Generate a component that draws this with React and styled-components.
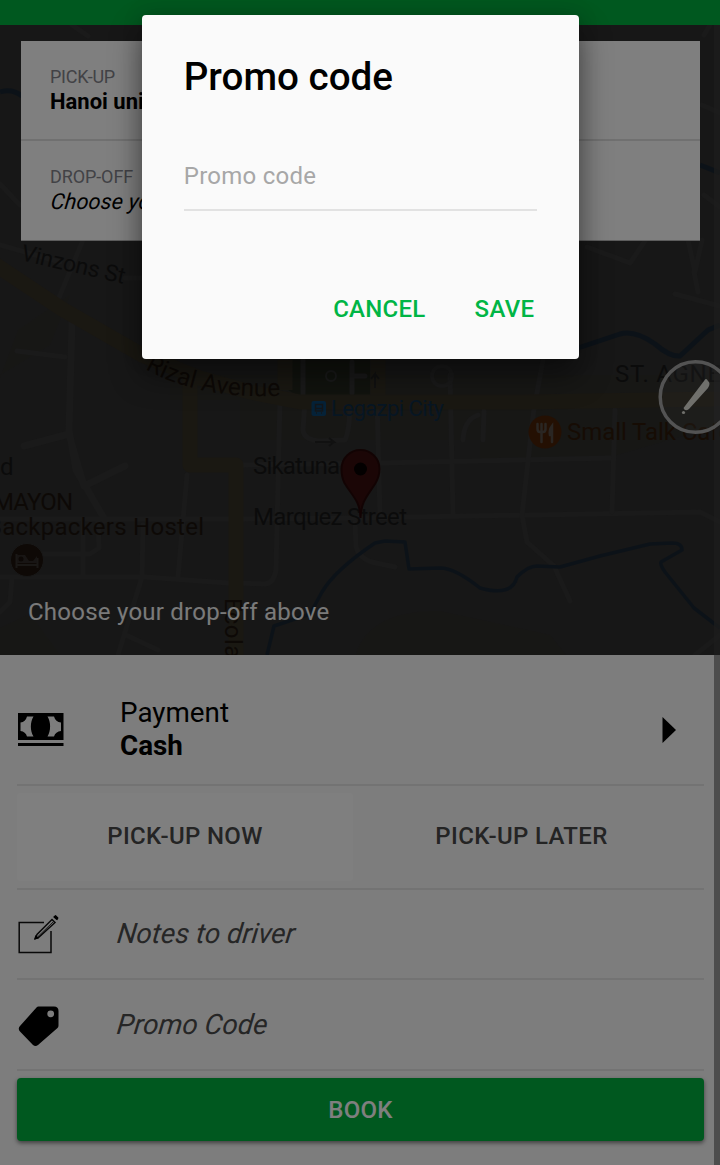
import React from "react";
import styled, { createGlobalStyle } from "styled-components";

const GlobalStyle = createGlobalStyle`
  *, *::before, *::after { box-sizing: border-box; }
  body { margin: 0; background: #7d7d7d; font-family: Roboto, "Liberation Sans", sans-serif; }
  button, input { font-family: inherit; }
`;

const Screen = styled.div`
  position: relative;
  display: flex;
  flex-direction: column;
  width: 720px;
  height: 1165px;
  overflow: hidden;
`;

const StatusBar = styled.header`
  height: 25px;
  flex: none;
  background: #00b03e;
`;

const MapArea = styled.section`
  position: relative;
  display: flex;
  flex-direction: column;
  justify-content: space-between;
  height: 630px;
  flex: none;
  padding: 16px 20px 29px 21px;
  background: #2e2e2e;
`;

const MapDrawing = styled.svg`
  position: absolute;
  inset: 0;
  width: 720px;
  height: 630px;
  font-family: Roboto, "Liberation Sans", sans-serif;
`;

const TripCard = styled.div`
  position: relative;
  background: #ffffff;
  border-bottom: 1px solid #b8b8b8;
`;

const TripRow = styled.div`
  height: ${(p) => p.$height}px;
  padding: 26px 29px 0;
  white-space: nowrap;
  overflow: hidden;
  & + & { border-top: 2px solid #e0e0e0; }
`;

const TripLabel = styled.div`
  font-size: 18px;
  line-height: 20px;
  letter-spacing: ${(p) => p.$spacing || -0.25}px;
  color: #85858c;
`;

const TripValue = styled.div`
  margin-top: 2px;
  font-size: 22px;
  line-height: 26px;
  font-weight: ${(p) => (p.$empty ? 400 : 700)};
  font-style: ${(p) => (p.$empty ? "italic" : "normal")};
  transform: ${(p) => (p.$empty ? "skewX(-7deg)" : "none")};
  transform-origin: 0 20px;
  color: #000;
`;

const MapHint = styled.p`
  position: relative;
  margin: 0 0 0 7px;
  font-size: 24px;
  line-height: 28px;
  letter-spacing: 0.24px;
  color: #f4f4f4;
`;

const Booking = styled.main`
  display: flex;
  flex-direction: column;
  flex: 1;
  padding: 0 10px 0 17px;
  background: #fafafa;
  border-right: 6px solid #9a9a9a;
`;

const Divided = styled.div`
  display: flex;
  align-items: center;
  flex: none;
  height: ${(p) => p.$height}px;
  border-bottom: 2px solid #e6e6e6;
`;

const IconSlot = styled.span`
  display: flex;
  width: ${(p) => p.$width}px;
  padding-top: ${(p) => p.$drop || 0}px;
  flex: none;
`;

const PaymentText = styled.div`
  flex: 1;
  padding-top: 19px;
  font-size: 27.8px;
  line-height: 33px;
  color: #000;
`;

const PaymentMethod = styled.strong`
  display: block;
  font-weight: 700;
`;

const Chevron = styled.svg`
  margin: 20px 28px 0 0;
`;

const TimeOption = styled.button`
  width: ${(p) => p.$width}px;
  height: 88px;
  border: 0;
  border-radius: 3px;
  padding: 0 0 2px;
  background: ${(p) => (p.$active ? "#ffffff" : "transparent")};
  color: #484848;
  font-size: 24px;
  letter-spacing: 0.35px;
  font-weight: 500;
`;

const Placeholder = styled.span`
  padding-top: ${(p) => p.$drop || 0}px;
  font-size: 28px;
  line-height: 34px;
  font-style: italic;
  transform: skewX(-7deg);
  transform-origin: 0 28px;
  color: #4c4c4c;
`;

const BookButton = styled.button`
  height: 63px;
  margin-top: 7px;
  flex: none;
  border: 0;
  border-radius: 4px;
  padding: 0;
  background: #00b03e;
  color: #fff;
  font-size: 24px;
  letter-spacing: 0.25px;
  font-weight: 500;
  box-shadow: 0 2px 4px rgba(0, 0, 0, 0.5);
`;

const Scrim = styled.div`
  position: absolute;
  inset: 0;
  display: flex;
  align-items: flex-start;
  justify-content: center;
  padding: 14.5px 0 0 1px;
  background: rgba(0, 0, 0, 0.5);
`;

const Dialog = styled.form`
  display: flex;
  flex-direction: column;
  width: 437.5px;
  height: 344.5px;
  padding: 39px 42px 29px;
  border-radius: 4px;
  background: #fafafa;
  box-shadow: 0 16px 32px rgba(0, 0, 0, 0.45), 0 0 20px rgba(0, 0, 0, 0.15);
`;

const DialogTitle = styled.h1`
  margin: 0;
  font-size: 38.6px;
  line-height: 46px;
  font-weight: 500;
  color: #000;
`;

const DialogInput = styled.input`
  height: 55px;
  margin-top: 56px;
  padding: 0 0 12px;
  border: 0;
  border-bottom: 2px solid #e2e2e2;
  border-radius: 0;
  outline: 0;
  background: transparent;
  font-size: 24px;
  letter-spacing: 0.25px;
  &::placeholder { color: #a7a7a7; opacity: 1; }
`;

const DialogActions = styled.div`
  display: flex;
  justify-content: flex-end;
  gap: 49px;
  margin-top: auto;
  padding-right: 3px;
`;

const TextButton = styled.button`
  padding: 0;
  border: 0;
  background: none;
  color: #00b545;
  font-size: 24px;
  letter-spacing: 0.28px;
  line-height: 42px;
  font-weight: 500;
`;

const PenBubble = styled.svg`
  position: absolute;
  left: 657px;
  top: 359px;
`;

function CityMap() {
  return (
    <MapDrawing viewBox="0 25 720 630">
      <g fill="#302f29">
        <path d="M0 378L18 330L70 295L50 345L0 375Z" opacity=".6" />
        <path d="M170 375H720V425L600 460L480 462V440H240V400H170Z" opacity=".4" />
        <path d="M356 655C365 622 400 610 440 611C480 620 520 628 550 635L566 655Z" opacity=".6" />
        <path d="M0 628L30 614L60 655H0Z" opacity=".6" />
      </g>
      <path d="M288 359H370V399H304L288 390Z" fill="#22271d" />
      <g fill="none" stroke="#343434" strokeWidth="5" strokeLinecap="round" strokeLinejoin="round">
        <path d="M72 25L88 36M0 184L20 205M0 245L60 262M125 278H142M83 240L58 300M17 351L65 357" />
        <path d="M72 322L69 430L76 470L105 520M24 446L69 434M70 438L84 486L125 466" strokeWidth="7" />
        <path d="M0 519H228M187 475L178 577M0 577H145L228 583M143 525L142 577L118 655M83 523V576M98 521L99 548L90 554H30M12 577L10 602L0 612M126 635L158 650" />
        <path d="M303 360V398M305 400L303 430Q304 440 320 441L345 440Q350 430 350 400M280 399L276 570Q274 583 265 584L240 583M377 399L380 515M450 375L453 515M240 519L360 518L700 512L720 522M240 465L380 463L612 458" />
        <path d="M352 362V393M352 376H365M355 522L356 547Q360 560 376 563L395 567M543 360L536 398M534 408L522 515L527 542L554 566L570 601M615 410L612 512M484 411L483 440M463 440Q464 420 478 415" />
        <path d="M587 247L630 263L645 241M675 294L720 306M688 240L695 272L702 240M694 272L698 292M704 35L710 25M702 105L720 113M704 195L720 207M695 655L720 635" />
        <circle cx="331" cy="376" r="5" strokeWidth="2" />
        <circle cx="442" cy="376" r="10" strokeWidth="4" />
      </g>
      <g fill="none" stroke="#353024" strokeWidth="15" strokeLinejoin="round">
        <path d="M-4 265L62 309L142 355L200 378L250 392L300 402H520L720 399" />
        <path d="M190 378V465H236V655M285 360V390M378 360V399" />
      </g>
      <g fill="none" stroke="#192531" strokeWidth="3.500" strokeLinejoin="round">
        <path d="M0 92Q12 88 22 96M700 165L720 173M578 348L620 334Q635 330 655 344Q670 357 680 356L708 330L720 325" strokeWidth="5" />
        <path d="M267 655L274 626L310 614L322 592Q335 570 375 543L385 541L405 542L409 569L440 568Q455 568 480 588Q512 597 517 577Q528 566 537 566L560 567L600 556L650 544L672 543Q682 543 682 550L661 562Q660 565 665 572L694 608L720 628" />
      </g>
      <g fontSize="24">
        <g fill="#171717">
          <text x="20" y="260" fontSize="23" textLength="106" transform="rotate(13 20 260)">Vinzons St</text>
          <text x="0" y="475" textLength="13">d</text>
          <text x="253" y="474" textLength="87">Sikatuna</text>
          <text x="253" y="525" textLength="154">Marquez Street</text>
          <text x="615" y="382" textLength="121">ST. AGNES</text>
        </g>
        <path id="avenue" d="M145 369Q204 402 292 395" fill="none" />
        <g fill="#1b130d">
          <text fontSize="24.500" textLength="140"><textPath href="#avenue">Rizal Avenue</textPath></text>
          <text x="-7" y="510" textLength="80">MAYON</text>
          <text x="-13" y="535" textLength="217">Backpackers Hostel</text>
          <text x="225" y="598" textLength="88" transform="rotate(90 225 598)">Ecoland</text>
        </g>
        <text x="567" y="440" textLength="164" fill="#2c1809">Small Talk Cafe</text>
        <text x="331" y="416" fontSize="22" textLength="113" fill="#0e2c46">Legazpi City</text>
      </g>
      <path d="M375 388V374L371 379M375 374L379 379M315 442H334L329 438M334 442L329 446" fill="none" stroke="#222" strokeWidth="2" />
      <rect x="311.500" y="401" width="14.500" height="15" rx="2" fill="#0a4470" />
      <path d="M315.500 404.500H322.500V411H315.500ZM315.500 408.500H322.500M316 413H317M321 413H322" fill="none" stroke="#262d34" strokeWidth="1.500" />
      <circle cx="545" cy="432" r="16.500" fill="#482107" />
      <path d="M537.500 424V429Q537.500 432 540 432H543Q545.500 432 545.500 429V424M541.500 424V442M552 442V426Q549 430 550 435H552" fill="none" stroke="#544c46" strokeWidth="2.500" strokeLinecap="round" />
      <circle cx="27" cy="560" r="16.500" fill="#1c120c" stroke="#303030" />
      <path d="M16.500 554V568M16.500 565H37.500V568M37.500 564V558" fill="none" stroke="#35302d" strokeWidth="2" />
      <path d="M17 563V555H25L29 561H33L37 556V563Z" fill="#302b28" />
      <circle cx="21" cy="559" r="2.500" fill="#1a110c" />
      <path d="M360.500 518C360 500 352 496 344.500 483C342 478 341.500 474 341.500 469A19 19 0 0 1 379.500 469C379.500 474 378 479 375 484C368 495 361 501 360.500 518Z" fill="#360d0d" stroke="#250707" strokeWidth="2" />
      <circle cx="360.500" cy="469" r="6.500" fill="#070000" />
      <path d="M714 25H720V655H714Z" fill="#3b3b3b" opacity=".7" />
    </MapDrawing>
  );
}

function CashIcon() {
  return (
    <svg width="46" height="34" viewBox="0 0 46 34">
      <path d="M0 0H45.500V27H0ZM0 30H45.500V33H0Z" />
      <path d="M9 3.500H15.500C12 9 12 18 15.500 23.500H9Q7.500 18.500 2.500 18V9.500Q7.500 9 9 3.500ZM36 3.500H29.500C33 9 33 18 29.500 23.500H36Q37.500 18.500 43 18V9.500Q37.500 9 36 3.500Z" fill="#fafafa" />
    </svg>
  );
}

function NotesIcon() {
  return (
    <svg width="42" height="40" viewBox="0 0 42 40" fill="none">
      <path d="M27 7.500H2.200V37.500H34V16" stroke="#111" strokeWidth="1.500" />
      <path d="M18.500 23.500L20 19.500L35 4.500L38 7.500L22 22Z" stroke="#111" strokeWidth="1.500" />
      <path d="M20.500 22L36 7" stroke="#333" strokeWidth="1" />
      <path d="M17 24.500L18.500 20L22 23.500Z" fill="#000" />
      <path d="M37 2L38.500 .800L40.800 3L40 4.500Z" fill="#000" stroke="#000" strokeWidth="1.300" strokeLinejoin="round" />
    </svg>
  );
}

function TagIcon() {
  return (
    <svg width="42" height="41" viewBox="0 0 42 41">
      <path fillRule="evenodd" d="M21.500 .5H37Q41.500 .5 41.500 5V19.500Q41.500 21 40.500 22L21 39Q18.500 41 16 39L3 25.500Q.500 22.500 3 20L19.500 1.500Q20.300 .5 21.500 .5ZM33.700 4.400A3.400 3.400 0 1 0 33.700 11.200A3.400 3.400 0 1 0 33.700 4.400Z" />
    </svg>
  );
}

export default function App() {
  return (
    <>
      <GlobalStyle />
      <Screen>
        <StatusBar />
        <MapArea>
          <CityMap />
          <TripCard>
            <TripRow $height={98}>
              <TripLabel>PICK-UP</TripLabel>
              <TripValue>Hanoi university</TripValue>
            </TripRow>
            <TripRow $height={101}>
              <TripLabel $spacing={-0.1}>DROP-OFF</TripLabel>
              <TripValue $empty>Choose your drop-off</TripValue>
            </TripRow>
          </TripCard>
          <MapHint>Choose your drop-off above</MapHint>
        </MapArea>
        <Booking>
          <Divided $height={131}>
            <IconSlot $width={103} $drop={2}>
              <svg width="47" height="52" viewBox="-1 -18 47 52">
                <CashIcon />
              </svg>
            </IconSlot>
            <PaymentText>
              Payment
              <PaymentMethod>Cash</PaymentMethod>
            </PaymentText>
            <Chevron width="14" height="26" viewBox="0 0 14 26">
              <path d="M.500 0L14 13L.500 26Z" />
            </Chevron>
          </Divided>
          <Divided $height={104}>
            <TimeOption $width={336} $active>PICK-UP NOW</TimeOption>
            <TimeOption $width={337}>PICK-UP LATER</TimeOption>
          </Divided>
          <Divided $height={90}>
            <IconSlot $width={99} $drop={2}><NotesIcon /></IconSlot>
            <Placeholder>Notes to driver</Placeholder>
          </Divided>
          <Divided $height={91}>
            <IconSlot $width={99} $drop={3}><TagIcon /></IconSlot>
            <Placeholder $drop={1}>Promo Code</Placeholder>
          </Divided>
          <BookButton>BOOK</BookButton>
        </Booking>
        <Scrim>
          <Dialog>
            <DialogTitle>Promo code</DialogTitle>
            <DialogInput placeholder="Promo code" />
            <DialogActions>
              <TextButton type="button">CANCEL</TextButton>
              <TextButton type="button">SAVE</TextButton>
            </DialogActions>
          </Dialog>
        </Scrim>
        <PenBubble width="76" height="76" viewBox="0 0 76 76">
          <circle cx="38.500" cy="38" r="35.300" fill="rgba(70,70,70,.15)" stroke="#535353" strokeWidth="3.500" />
          <path d="M26.500 49L47 22Q49 18 51 22Q54 24 51 29L32 50Q28 53 26.500 49Z" fill="#70706c" />
          <circle cx="26.500" cy="53.500" r="1.600" fill="#70706c" />
        </PenBubble>
      </Screen>
    </>
  );
}
